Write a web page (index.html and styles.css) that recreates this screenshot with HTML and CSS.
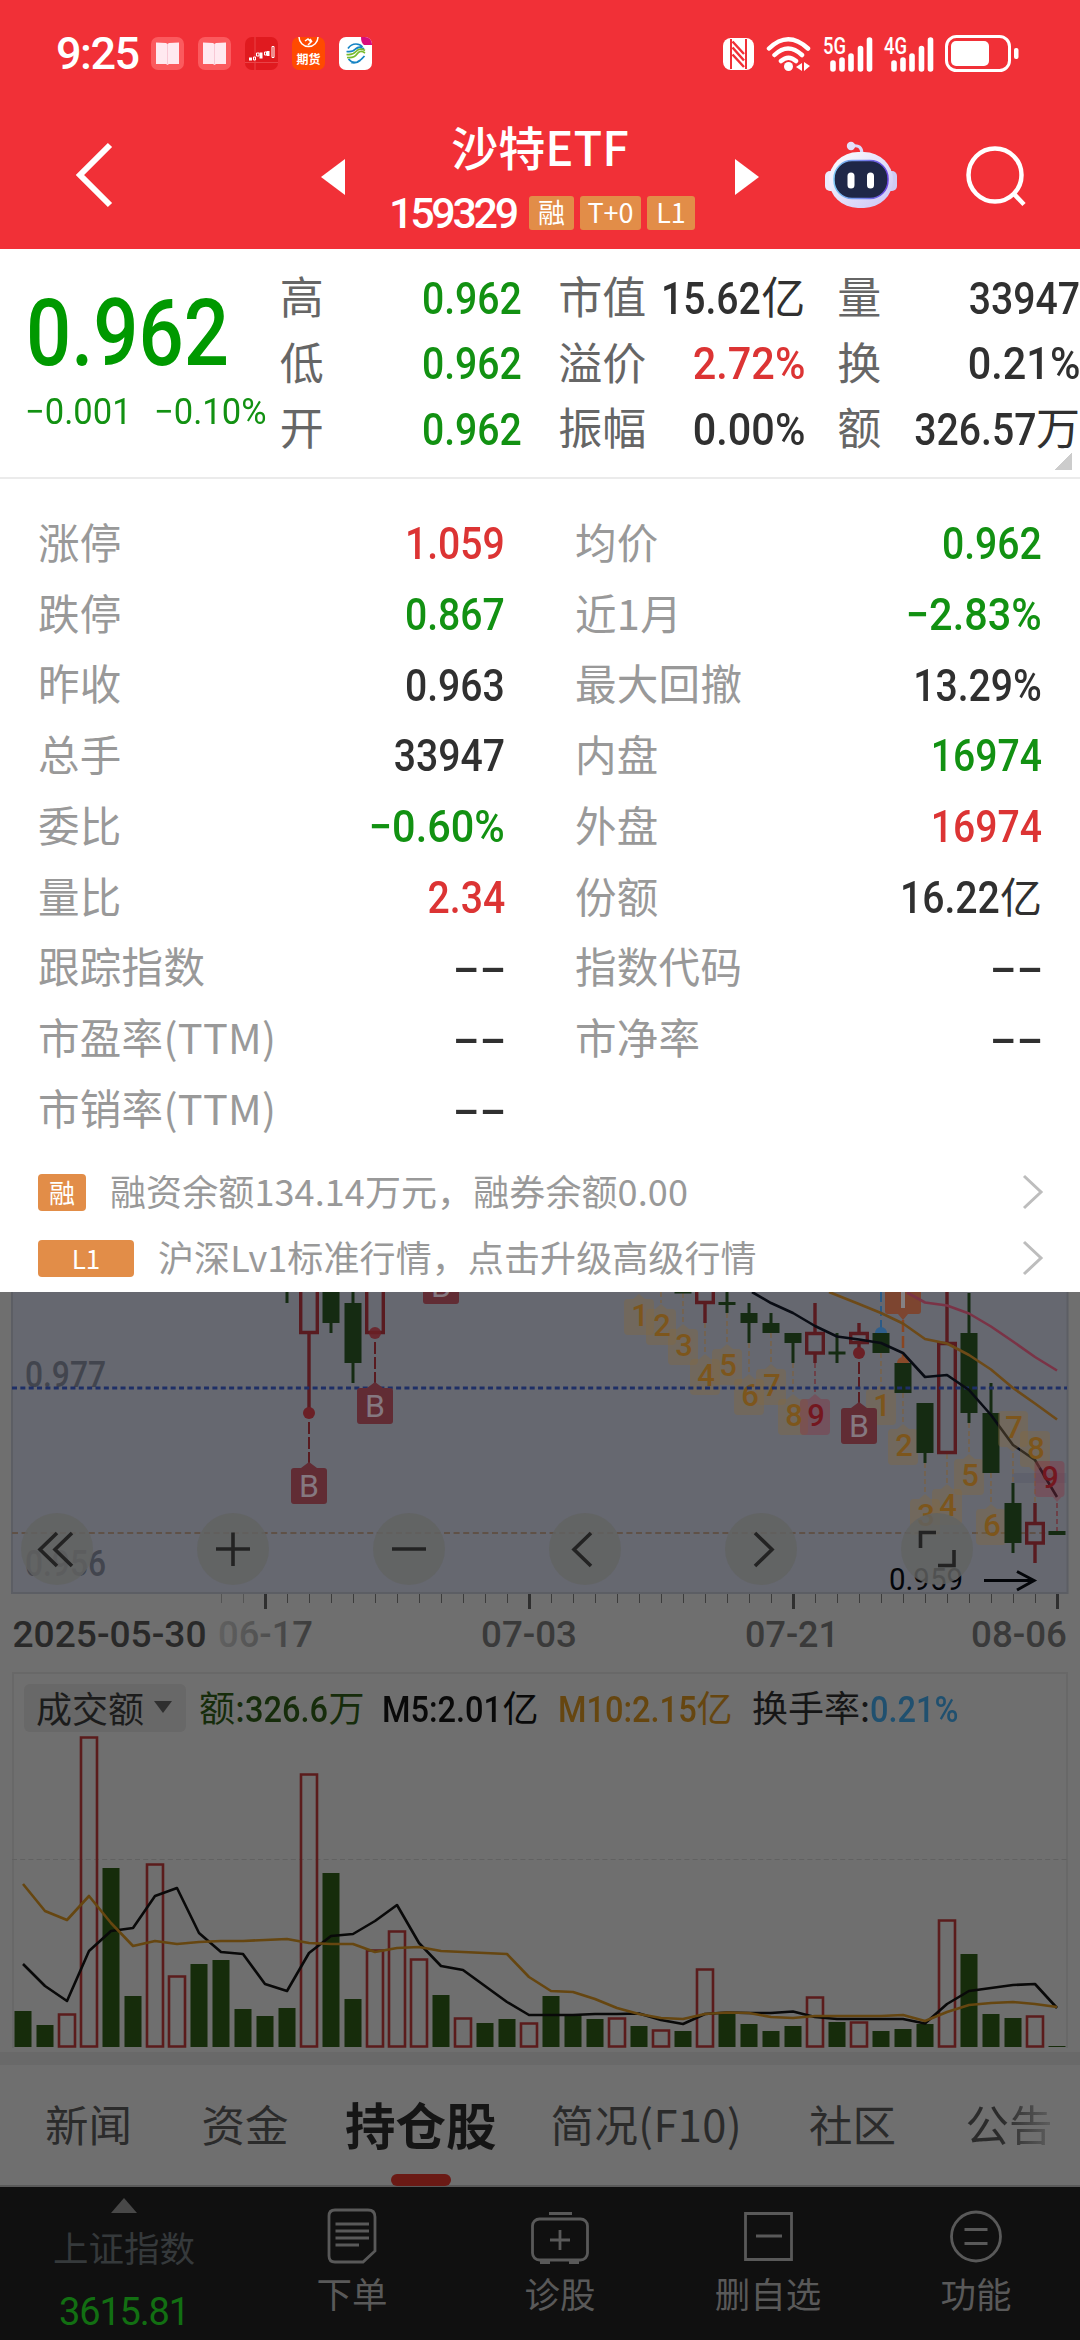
FILE: index.html
```html
<!DOCTYPE html>
<html lang="zh-CN">
<head>
<meta charset="utf-8">
<title>沙特ETF 159329</title>
<link rel="stylesheet" href="styles.css">
</head>
<body>
<header class="top">
  <div class="status">
    <span class="clock">9:25</span>
    <div class="apps">
      <svg class="app" viewBox="0 0 33 33"><rect width="33" height="33" rx="7" fill="#fb5a5e"/><path d="M5 5.500 L15 6 16.500 7 18 6 28 5.500V27H18L16.500 28 15 27H5Z" fill="#ffe9f0"/><path d="M16.500 7V28" stroke="#f8c9d6"/></svg>
      <svg class="app" viewBox="0 0 33 33"><rect width="33" height="33" rx="7" fill="#fb5a5e"/><path d="M5 5.500 L15 6 16.500 7 18 6 28 5.500V27H18L16.500 28 15 27H5Z" fill="#ffe9f0"/><path d="M16.500 7V28" stroke="#f8c9d6"/></svg>
      <svg class="app" viewBox="0 0 33 33"><rect width="33" height="33" rx="7" fill="#e01a1f"/><path d="M0 25.500H33M10 0V33" stroke="#e94347"/><path d="M4 22h3M16 15.500v6M23 14v5" stroke="#fff" stroke-width="3"/><path d="M8.500 20h2v3h-2zM11.500 16h2.500v3h-2.500zM19.500 15h2v3h-2zM27 9.500h2v11h-2z" fill="none" stroke="#fff"/></svg>
      <svg class="app" viewBox="0 0 33 33"><rect width="33" height="33" rx="7" fill="#ff4a00"/><path d="M7 0a9.500 9.500 0 0 0 19 0" fill="none" stroke="#fff" stroke-width="1.500"/><path d="M13 4l3-2 3 3-3 3M18 2l2 3" fill="none" stroke="#fff" stroke-width="1.500"/><text x="16.500" y="26.500" class="app-word">期货</text></svg>
      <svg class="app" viewBox="0 0 33 33"><rect width="33" height="33" rx="7" fill="#fff"/><path d="M22 0h4a7 7 0 0 1 7 7v1h-8q-3-2-3-8z" fill="#d80c7c"/><g fill="none" stroke-width="1.700"><path d="M9 11.500q3-4.500 8-4.500 4 0 6.500 3M7.500 14.500q6 1 9-2.500 4-3.500 8.500 0M9.500 22q3.500 4.500 8.500 3 4-1.500 7.500-6M12 25.500q5 1.500 9-2 2.500-2.500 4-4" stroke="#1684c4"/><path d="M7.500 17.500q6 1 9.500-3t9-1M8 20.500q7 1 10-3.500t8-1" stroke="#79bb2c"/></g></svg>
    </div>
    <div class="signals">
      <svg width="32" height="34" viewBox="0 0 32 34"><rect x="0" y="1" width="31" height="32" rx="8" fill="#fff"/><path d="M8 2V32M23 2V32" stroke="#f13037" stroke-width="2"/><path d="M9.500 4.500L21 17M9.500 10.500L21 23.500M9.500 17.500L21 30" stroke="#f13037" stroke-width="2.500"/></svg>
      <svg width="46" height="36" viewBox="0 0 46 36" fill="none" stroke="#fff" stroke-width="4.500" stroke-linecap="round"><path d="M3 12.500Q22 -6 42 12.500M8.500 19Q22 6 36 19M15 25Q22.500 18.500 30 25"/><circle cx="22.500" cy="30.500" r="4.500" fill="#fff" stroke="none"/><path d="M36 27v8l-6-4zM38 26l6 4-6 5z" fill="#fff" stroke="none"/></svg>
      <svg class="cell" width="50" height="36" viewBox="0 0 50 36"><text x="0" y="18" class="net" textLength="23" lengthAdjust="spacingAndGlyphs">5G</text><path d="M10 27V33M19 24V33M28 20V33M37.500 12.500V33M46.500 4V33" stroke="#fff" stroke-width="5.600" stroke-linecap="round"/></svg>
      <svg class="cell" width="50" height="36" viewBox="0 0 50 36"><text x="0" y="18" class="net" textLength="23" lengthAdjust="spacingAndGlyphs">4G</text><path d="M10 27V33M19 24V33M28 20V33M37.500 12.500V33M46.500 4V33" stroke="#fff" stroke-width="5.600" stroke-linecap="round"/></svg>
      <svg width="74" height="38" viewBox="0 0 74 38"><rect x="1.500" y="1.500" width="63" height="34" rx="10" fill="none" stroke="#fff" stroke-width="3"/><rect x="6" y="6" width="38" height="25" rx="5" fill="#fff"/><rect x="69" y="13" width="4.500" height="11" rx="2" fill="#fff"/></svg>
    </div>
  </div>
  <nav class="nav">
    <svg class="back" width="40" height="66" viewBox="0 0 40 66"><path d="M36 3L6 33 36 63" fill="none" stroke="#fff" stroke-width="6"/></svg>
    <svg class="prev" width="24" height="36" viewBox="0 0 24 36"><path d="M0 18L24 0V36Z" fill="#fff"/></svg>
    <div class="title">
      <h1>沙特ETF</h1>
      <div class="code-row"><span class="code">159329</span><span class="tag t-rong">融</span><span class="tag t-t0">T+0</span><span class="tag t-l1">L1</span></div>
    </div>
    <svg class="next" width="24" height="36" viewBox="0 0 24 36"><path d="M24 18L0 0V36Z" fill="#fff"/></svg>
    <svg class="robot" width="74" height="70" viewBox="0 0 74 70"><defs><linearGradient id="shell" x1="0" y1="0" x2="1" y2="1"><stop offset="0" stop-color="#fff"/><stop offset="1" stop-color="#c9c4f5"/></linearGradient><linearGradient id="rim" x1="0" y1="0" x2="1" y2="0"><stop offset="0" stop-color="#7ec8f5"/><stop offset="1" stop-color="#6a45e0"/></linearGradient></defs><path d="M27 5Q37 3 37 13" fill="none" stroke="#dcdafa" stroke-width="3"/><circle cx="26" cy="5" r="4.200" fill="#e4e1fb"/><rect x="0" y="30" width="12" height="20" rx="5" fill="#eceafc"/><rect x="60" y="30" width="12" height="20" rx="5" fill="#cfcbf4"/><rect x="4" y="11" width="64" height="56" rx="29" fill="url(#shell)"/><rect x="9" y="19.500" width="54" height="38" rx="18" fill="#1f2747" stroke="url(#rim)" stroke-width="1.500"/><path d="M26 35v9M45.500 35v9" stroke="#fff" stroke-width="7" stroke-linecap="round"/></svg>
    <svg class="search" width="62" height="62" viewBox="0 0 62 62" fill="none" stroke="#fff" stroke-width="4.500"><circle cx="29" cy="29" r="26.500"/><path d="M48 48L58 58.500"/></svg>
  </nav>
</header>

<section class="quote">
  <div class="price">
    <span class="num big">0.962</span>
    <div class="change"><span class="num">−0.001</span><span class="num">−0.10%</span></div>
  </div>
  <dl class="stats s1">
    <dt>高</dt><dd class="dn"><span class="num">0.962</span></dd>
    <dt>低</dt><dd class="dn"><span class="num">0.962</span></dd>
    <dt>开</dt><dd class="dn"><span class="num">0.962</span></dd>
  </dl>
  <dl class="stats s2">
    <dt>市值</dt><dd><span class="num">15.62</span>亿</dd>
    <dt>溢价</dt><dd class="up"><span class="num pct">2.72%</span></dd>
    <dt>振幅</dt><dd><span class="num pct">0.00%</span></dd>
  </dl>
  <dl class="stats s3">
    <dt>量</dt><dd><span class="num">33947</span></dd>
    <dt>换</dt><dd><span class="num pct">0.21%</span></dd>
    <dt>额</dt><dd><span class="num">326.57</span>万</dd>
  </dl>
  <i class="corner"></i>
</section>

<section class="detail">
  <dl>
    <dt>涨停</dt><dd class="up"><span class="num">1.059</span></dd>
    <dt>跌停</dt><dd class="dn"><span class="num">0.867</span></dd>
    <dt>昨收</dt><dd><span class="num">0.963</span></dd>
    <dt>总手</dt><dd><span class="num">33947</span></dd>
    <dt>委比</dt><dd class="dn"><span class="num pct">−0.60%</span></dd>
    <dt>量比</dt><dd class="up"><span class="num">2.34</span></dd>
    <dt>跟踪指数</dt><dd><span class="none">--</span></dd>
    <dt>市盈率(TTM)</dt><dd><span class="none">--</span></dd>
    <dt>市销率(TTM)</dt><dd><span class="none">--</span></dd>
  </dl>
  <dl>
    <dt>均价</dt><dd class="dn"><span class="num">0.962</span></dd>
    <dt>近1月</dt><dd class="dn"><span class="num pct">−2.83%</span></dd>
    <dt>最大回撤</dt><dd><span class="num">13.29%</span></dd>
    <dt>内盘</dt><dd class="dn"><span class="num">16974</span></dd>
    <dt>外盘</dt><dd class="up"><span class="num">16974</span></dd>
    <dt>份额</dt><dd><span class="num">16.22</span>亿</dd>
    <dt>指数代码</dt><dd><span class="none">--</span></dd>
    <dt>市净率</dt><dd><span class="none">--</span></dd>
  </dl>
</section>

<section class="notices">
  <div class="notice"><span class="badge">融</span><p>融资余额134.14万元，融券余额0.00</p><svg width="24" height="36" viewBox="0 0 24 36"><path d="M3 2L20 18 3 34" fill="none" stroke="#bdbdbd" stroke-width="3"/></svg></div>
  <div class="notice"><span class="badge wide">L1</span><p>沪深Lv1标准行情，点击升级高级行情</p><svg width="24" height="36" viewBox="0 0 24 36"><path d="M3 2L20 18 3 34" fill="none" stroke="#bdbdbd" stroke-width="3"/></svg></div>
</section>

<svg class="kline" viewBox="0 1292 1080 380">
  <defs>
    <path id="flagU" d="M-11 0H-6L0-5 6 0H11Q15 0 15 4V32Q15 36 11 36H-11Q-15 36-15 32V4Q-15 0-11 0Z"/>
    <path id="flagD" d="M-11 0H11Q15 0 15 4V32Q15 36 11 36H6L0 41-6 36H-11Q-15 36-15 32V4Q-15 0-11 0Z"/>
    <path id="flagB" d="M-15 0H-8L0-6 8 0H15Q18 0 18 3V33Q18 36 15 36H-15Q-18 36-18 33V3Q-18 0-15 0Z"/>
    <linearGradient id="fade" x1="0" x2="1"><stop offset="0" stop-color="#606060"/><stop offset=".5" stop-color="#505050"/><stop offset="1" stop-color="#3c3c3c"/></linearGradient>
  </defs>
  <rect x="12" y="1280" width="1055.500" height="313" fill="#666870" stroke="#5c5e64" stroke-width="2"/>
  <rect x="1012" y="1473" width="55" height="10" fill="#5f616c"/>
  <g class="level"><text x="25" y="1387" textLength="81" lengthAdjust="spacingAndGlyphs">0.977</text><text x="25" y="1576" textLength="81" lengthAdjust="spacingAndGlyphs">0.956</text></g>
  <path d="M12 1533H1067" stroke="#5f5147" stroke-width="2" stroke-dasharray="6 3.600"/>

  <g class="dots"><path d="M661 1292V1303M683 1293V1323M705 1323V1354M727 1313V1343M749 1343V1373M771 1333V1363M793 1363V1393M881 1353V1383M903 1393V1423M925 1463V1493M947 1454V1483M969 1423V1453M991 1473V1503M1013 1453V1483M1035 1473V1503"/><path d="M815 1363V1393M1057 1503V1531" class="dots-red"/></g>

  <g class="flags">
    <use href="#flagU" x="639" y="1299"/><use href="#flagU" x="661" y="1309"/><use href="#flagU" x="683" y="1329"/><use href="#flagU" x="705" y="1359"/><use href="#flagU" x="727" y="1349"/><use href="#flagU" x="749" y="1379"/><use href="#flagU" x="771" y="1369"/><use href="#flagU" x="793" y="1399"/><use href="#flagU" x="881" y="1389"/><use href="#flagU" x="903" y="1429"/><use href="#flagU" x="925" y="1499"/><use href="#flagU" x="947" y="1489"/><use href="#flagU" x="969" y="1459"/><use href="#flagU" x="991" y="1509"/>
    <use href="#flagU" x="815" y="1399" class="f-red"/>
  </g>
  <g class="flag-no">
    <text x="640" y="1326">1</text><text x="662" y="1336">2</text><text x="684" y="1356">3</text><text x="706" y="1386">4</text><text x="728" y="1376">5</text><text x="750" y="1406">6</text><text x="772" y="1396">7</text><text x="794" y="1426">8</text><text x="882" y="1416">1</text><text x="904" y="1456">2</text><text x="926" y="1526">3</text><text x="948" y="1516">4</text><text x="970" y="1486">5</text><text x="992" y="1536">6</text><text x="816" y="1426" class="n-red">9</text>
  </g>

  <g fill="#152b12">
    <path d="M285.500 1292h3v11h-3zM322.500 1292h17v31h-17zM329.500 1323h3v10h-3zM351.500 1292h3v91h-3zM344.500 1303h17v60h-17z"/>
    <path d="M674.500 1292h17v1.500h-17zM725.500 1292h3v21h-3zM718.500 1302h17v3h-17zM747.500 1303h3v40h-3zM740.500 1313h17v10h-17zM769.500 1313h3v20h-3zM762.500 1323h17v10h-17zM791.500 1333h3v30h-3zM784.500 1333h17v10h-17zM835.500 1333h3v30h-3zM828.500 1351.500h17v3h-17zM872.500 1333h17v20h-17zM894.500 1363h17v30h-17zM923.500 1403h3v60h-3zM916.500 1403h17v50h-17zM967.500 1293h3v130h-3zM960.500 1333h17v80h-17zM989.500 1383h3v30h-3zM982.500 1413h17v60h-17zM1011.500 1483h3v70h-3zM1004.500 1503h17v40h-17zM1048.500 1531h17v4h-17z"/>
  </g>
  <g fill="none" stroke="#591b20" stroke-width="3.400">
    <path d="M300.700 1285V1332.500H317.300V1285M309 1334V1413M366.700 1285V1332.500H383.300V1285"/>
    <path d="M696.700 1285V1302.500H713.300V1285M705 1304V1323M806.700 1333.500h16.600v19.500h-16.600zM815 1303v29M815 1354v9M850.700 1333.500h16.600v9h-16.600zM859 1323v9M859 1344v9M938.700 1343.500h16.600v109h-16.600zM947 1292v50M1026.700 1523.500h16.600v19.500h-16.600zM1035 1503v19M1035 1544v19"/>
  </g>
  <g fill="#6b2026"><circle cx="309" cy="1413" r="6"/><circle cx="375" cy="1333" r="6" fill-opacity=".85"/><circle cx="859" cy="1353" r="6"/></g>
  <path d="M309 1422V1463M375 1342V1383M859 1362V1403" stroke="#591b20" stroke-width="2" stroke-dasharray="12 3"/>
  <path d="M881 1292V1328" stroke="#2b5a86" stroke-width="2" stroke-dasharray="10 4"/><path d="M875 1333a6 6 0 0 1 12 0z" fill="#2f5f8c"/>
  <path d="M903 1320V1358" stroke="#8a4622" stroke-width="2.500" stroke-dasharray="12 4"/><path d="M897 1363a6 6 0 0 1 12 0z" fill="#8a4a2a"/>
  <path d="M885 1285H921V1311Q921 1314 918 1314H908L903 1320 898 1314H888Q885 1314 885 1311Z" fill="#7d4530"/><path d="M903 1292V1308" stroke="#858184" stroke-width="4"/>
  <path d="M12 1388H1067" stroke="#1e2f66" stroke-width="3" stroke-dasharray="5 3.350"/>

  <g fill="#612c34"><use href="#flagB" x="309" y="1468"/><use href="#flagB" x="375" y="1388"/><use href="#flagB" x="859" y="1408"/><use href="#flagB" x="441" y="1268"/></g>
  <g class="b-mark"><text x="309" y="1497">B</text><text x="375" y="1417">B</text><text x="859" y="1437">B</text><text x="441" y="1297">B</text></g>

  <g fill="none" stroke-width="2.600" stroke-linejoin="round">
    <path stroke="#090c14" d="M752 1292L771 1303 793 1313 815 1326 837 1336.500 859 1339.500 881 1343 903 1353 925 1377 947 1375 969 1390 991 1415 1013 1445 1035 1460 1057 1497"/>
    <path stroke="#6d4a18" d="M829 1292L859 1304 881 1313 903 1323.500 925 1339 947 1343.500 969 1355 991 1369.500 1013 1388 1035 1403.500 1057 1419.500"/>
    <path stroke="#7a3346" d="M907 1292.500L925 1302.500 947 1305.500 969 1313.500 991 1326.500 1013 1341.500 1035 1357 1057 1370.500"/>
  </g>
  <g class="flags"><use href="#flagD" x="1013" y="1411"/><use href="#flagD" x="1035" y="1431"/><path d="M1038.500 1461H1060.500Q1064.500 1461 1064.500 1465V1493Q1064.500 1497 1061.500 1497L1057 1502 1053 1497H1038.500Q1034.500 1497 1034.500 1493V1465Q1034.500 1461 1038.500 1461Z" class="f-red"/></g>
  <g class="flag-no"><text x="1014" y="1438">7</text><text x="1036" y="1459">8</text><text x="1050" y="1488" class="n-red">9</text></g>

  <text x="889" y="1590" class="low" textLength="74" lengthAdjust="spacingAndGlyphs">0.959</text>
  <path d="M984 1580.500H1034M1017 1571.500L1034 1580.500 1017 1590" fill="none" stroke="#030509" stroke-width="3"/>

  <g fill="#626361" fill-opacity=".82"><circle cx="57" cy="1549" r="36"/><circle cx="233" cy="1549" r="36"/><circle cx="409" cy="1549" r="36"/><circle cx="585" cy="1549" r="36"/><circle cx="761" cy="1549" r="36"/><circle cx="937" cy="1549" r="36"/></g>
  <g fill="none" stroke="#232323" stroke-width="3.600">
    <path d="M57 1533L40 1549.500 57 1566M72 1533L55 1549.500 72 1566M216 1549H250M233 1532.500V1566M392 1549H426M591 1533L574 1549.500 591 1566M755 1533L772 1549.500 755 1566M920.500 1548V1532.500H936M954 1550V1565.500H938"/>
  </g>

  <path d="M221.500 1594V1603M243.500 1594V1603" stroke="#545454"/>
  <path d="M287.500 1594V1603M309.500 1594V1603M331.500 1594V1603M353.500 1594V1603M375.500 1594V1603M397.500 1594V1603M419.500 1594V1603M441.500 1594V1603M463.500 1594V1603M485.500 1594V1603M507.500 1594V1603M551.500 1594V1603M573.500 1594V1603M595.500 1594V1603M617.500 1594V1603M639.500 1594V1603M661.500 1594V1603M683.500 1594V1603M705.500 1594V1603M727.500 1594V1603M749.500 1594V1603M771.500 1594V1603M815.500 1594V1603M837.500 1594V1603M859.500 1594V1603M881.500 1594V1603M903.500 1594V1603M925.500 1594V1603M947.500 1594V1603M969.500 1594V1603M991.500 1594V1603M1013.500 1594V1603M1035.500 1594V1603" stroke="#3c3c3c"/>
  <path d="M265.500 1594V1609M529.500 1594V1609M793.500 1594V1609M1057.500 1594V1609" stroke="#2f2f2f" stroke-width="3"/>
  <g class="dates">
    <text x="12.500" y="1647" fill="#292929" textLength="194" lengthAdjust="spacingAndGlyphs">2025-05-30</text>
    <text x="218" y="1647" fill="url(#fade)" textLength="95" lengthAdjust="spacingAndGlyphs">06-17</text>
    <text x="481" y="1647" textLength="96" lengthAdjust="spacingAndGlyphs">07-03</text>
    <text x="745" y="1647" textLength="94" lengthAdjust="spacingAndGlyphs">07-21</text>
    <text x="971" y="1647" textLength="96" lengthAdjust="spacingAndGlyphs">08-06</text>
  </g>
</svg>

<section class="volume">
  <div class="legend">
    <span class="pick">成交额<i></i></span>
    <span class="l-amt">额:<b>326.6</b>万</span>
    <span class="l-m5"><b>M5:2.01</b>亿</span>
    <span class="l-m10"><b>M10:2.15</b>亿</span>
    <span class="l-rate">换手率:<b>0.21%</b></span>
  </div>
  <svg class="bars" viewBox="12 1733 1056 315">
    <path d="M12 1859.500H1067" stroke="#616161" stroke-dasharray="5 3.200"/>
    <path fill="#162c0b" d="M14.500 2011h17v36h-17zM36.500 2025h17v22h-17zM102.500 1868h17v179h-17zM124.500 1996h17v51h-17zM190.500 1964h17v83h-17zM212.500 1960h17v87h-17zM234.500 2009h17v38h-17zM256.500 2016h17v31h-17zM278.500 2008h17v39h-17zM322.500 1873h17v174h-17zM344.500 1999h17v48h-17zM432.500 1995h17v52h-17zM476.500 2023h17v24h-17zM498.500 2019h17v28h-17zM542.500 1996h17v51h-17zM564.500 2015h17v32h-17zM586.500 2019h17v28h-17zM630.500 2026h17v21h-17zM674.500 2031h17v16h-17zM718.500 2014h17v33h-17zM740.500 2024h17v23h-17zM762.500 2031h17v16h-17zM784.500 2026h17v21h-17zM828.500 2022h17v25h-17zM872.500 2031h17v16h-17zM894.500 2029h17v18h-17zM916.500 2024h17v23h-17zM960.500 1954h17v93h-17zM982.500 2014h17v33h-17zM1004.500 2018h17v29h-17zM1048.500 2046h17v1h-17z"/>
    <path fill="none" stroke="#5b1c1c" stroke-width="2.600" d="M59 2014.500h16v32h-16zM81 1737.500h16v309h-16zM147 1864.500h16v182h-16zM169 1976.500h16v70h-16zM301 1774.500h16v272h-16zM367 1950.500h16v96h-16zM389 1931.500h16v115h-16zM411 1959.500h16v87h-16zM455 2018.500h16v28h-16zM521 2023.500h16v23h-16zM609 2018.500h16v28h-16zM653 2030.500h16v16h-16zM697 1969.500h16v77h-16zM807 1997.500h16v49h-16zM851 2022.500h16v24h-16zM939 1920.500h16v126h-16zM1027 2016.500h16v30h-16z"/>
    <g fill="none" stroke-width="2.600" stroke-linejoin="round">
      <path stroke="#090909" d="M23 1964L45 1986 67 2001 89 1951 111 1931 133 1928 155 1896 177 1888 199 1933 221 1952 243 1954 265 1984 287 1991 309 1953 331 1936 353 1934 375 1921 397 1905 419 1943 441 1966 463 1970 485 1986 507 2002 529 2015 551 2015 573 2015 595 2014 617 2014 639 2013.500 661 2020 683 2024 705 2014 727 2012.500 749 2013 771 2013 793 2011.500 815 2017 837 2019 859 2019 881 2019 903 2019 925 2023.500 947 2004 969 1991 991 1988 1013 1985 1035 1984 1057 2008"/>
      <path stroke="#664610" d="M23 1884L45 1911 67 1920 89 1896 111 1923 133 1946 155 1941 177 1944 199 1942 221 1941 243 1941 265 1940 287 1939 309 1943 331 1944 353 1944 375 1952 397 1948 419 1947 441 1951 463 1952 485 1953 507 1954 529 1977 551 1991 573 1992 595 1999 617 2008 639 2014 661 2018 683 2019 705 2014 727 2012.500 749 2013 771 2017 793 2018 815 2016 837 2016 859 2016 881 2016 903 2015 925 2021 947 2012 969 2005 991 2003 1013 2002 1035 2004 1057 2007"/>
    </g>
  </svg>
</section>

<div class="tabs">
  <span>新闻</span><span>资金</span><span class="on">持仓股</span><span class="f10">简况(F10)</span><span>社区</span><span class="last">公告</span>
</div>

<footer class="bottom">
  <div class="index"><i></i><span>上证指数</span><b>3615.81</b></div>
  <div class="act a1"><svg width="52" height="58" viewBox="0 0 52 58"><path d="M9 3H42Q49 3 49 10V44L37 55H9Q3 55 3 49V9Q3 3 9 3Z" /><path d="M9.500 17H43M9.500 24H43M9.500 31H43M9.500 38H33"/></svg><span>下单</span></div>
  <div class="act a2"><svg width="62" height="58" viewBox="0 0 62 58"><rect x="3.500" y="12" width="55" height="41" rx="7"/><path d="M20 6.500H43M31 23V43M21 33H41M11 55.500H21M40 55.500H50"/></svg><span>诊股</span></div>
  <div class="act a3"><svg width="52" height="58" viewBox="0 0 52 58"><path d="M3.500 6.500H49.500V52.500H3.500ZM14 29H40"/></svg><span>删自选</span></div>
  <div class="act a4"><svg width="56" height="58" viewBox="0 0 56 58"><circle cx="28" cy="29.500" r="24.500"/><path d="M16.500 22.500H39.500M16.500 36.500H39.500"/></svg><span>功能</span></div>
</footer>
</body>
</html>
```

FILE: styles.css
```css
* { box-sizing: border-box; margin: 0; padding: 0; }
body {
  width: 1080px; height: 2340px; overflow: hidden;
  display: flex; flex-direction: column;
  background: #6f6f6f; color: #303030;
  font-family: "Noto Sans CJK SC", sans-serif; line-height: 1;
}
svg { display: block; flex: none; }
i { font-style: normal; }

/* header */
.top { height: 249px; flex: none; background: #f13037; color: #fff; }
.status { height: 106px; display: flex; align-items: center; padding: 1px 61px 0 56px; }
.clock { width: 95px; font: 500 45px/1 Roboto, sans-serif; letter-spacing: -1.500px; }
.apps { display: flex; gap: 14px; }
.app { width: 33px; height: 33px; }
.app-word { font-size: 12px; font-weight: 700; fill: #fff; text-anchor: middle; }
.signals { margin-left: auto; display: flex; align-items: center; gap: 11px; }
.cell { overflow: visible; }
.net { font: 500 24px Roboto, sans-serif; fill: #fff; }
.nav { height: 143px; display: flex; align-items: flex-start; }
.back { margin: 36px 0 0 74px; }
.prev { margin: 53px 0 0 207px; }
.title { width: 390px; display: flex; flex-direction: column; align-items: center; }
h1 { margin-top: 15px; font-size: 47px; font-weight: 500; line-height: 50px; white-space: nowrap; }
.code-row { display: flex; align-items: center; height: 34px; margin: 25px 0 0 4px; }
.code { width: 140px; font: 500 43px/34px Roboto, sans-serif; letter-spacing: -3.300px; }
.tag { height: 34px; display: flex; align-items: center; justify-content: center; border-radius: 3px; background: #e28d48; color: #fff; font-size: 27px; line-height: 34px; padding-bottom: 3px; }
.t-rong { width: 45px; }
.t-t0 { width: 61px; margin: 0 6px; }
.t-l1 { width: 48px; }
.next { margin-top: 53px; }
.robot { margin: 35px 0 0 66px; }
.search { margin: 40px 0 0 67px; }

/* quote summary */
.num { display: inline-block; font-family: Roboto, sans-serif; font-size: 45px; font-weight: 500; transform: scaleX(.87); transform-origin: right center; }
.num.pct { transform: scaleX(.92); }
.up { color: #dc3434; }
.dn { color: #129112; }
.quote { position: relative; height: 230px; flex: none; display: flex; background: #fff; border-bottom: 2px solid #ebebeb; }
.price { width: 280px; padding: 44px 0 0 26px; color: #009900; }
.price .num { transform-origin: left center; }
.price .big { font-size: 92px; line-height: 82px; transform: scaleX(.865); }
.change { display: flex; gap: 18px; margin: 19px 0 0 -1px; color: #129112; }
.change .num { width: 111px; font-size: 36px; font-weight: 400; white-space: nowrap; transform: scaleX(.96); }
.stats { display: grid; grid-template-columns: auto 1fr; grid-auto-rows: 65.500px; align-items: center; padding-top: 15px; font-size: 44px; height: 212px; white-space: nowrap; }
.stats dt { color: #666; padding-bottom: 3px; }
.stats dd { text-align: right; }
.s1 { width: 242px; }
.s2 { width: 242px; margin-left: 37px; }
.s3 { width: 243px; margin-left: 37px; }
.corner { position: absolute; right: 8px; bottom: 7px; width: 18px; height: 18px; background: linear-gradient(135deg, transparent 50%, #ccc 50%); }

/* detail */
.detail { height: 668px; flex: none; display: flex; padding: 29px 38px 0; gap: 70px; background: #fff; }
.detail dl { display: grid; grid-template-columns: auto 1fr; grid-auto-rows: 70.700px; align-items: center; align-content: start; width: 468px; font-size: 42px; }
.detail dt { color: #999; font-size: 41.500px; letter-spacing: .3px; padding-bottom: 3px; }
.detail dd { text-align: right; }
.none { display: inline-block; font: 500 45px/1 Roboto, sans-serif; transform: scaleX(1.750); transform-origin: right center; margin-right: -2px; }

/* notices */
.notices { height: 145px; flex: none; padding-top: 12px; background: #fff; }
.notice { height: 66px; display: flex; align-items: center; padding: 0 35px 0 38px; }
.notice p { flex: 1; margin-left: 24px; padding-bottom: 4px; font-size: 36px; letter-spacing: .1px; color: #999; white-space: nowrap; }
.badge { width: 48px; height: 37px; border-radius: 4px; background: #e28d48; color: #fff; font-size: 26px; line-height: 36px; text-align: center; }
.badge.wide { width: 96px; }

/* candle chart */
.kline { width: 1080px; height: 380px; }
.kline text { font-family: Roboto, sans-serif; }
.level { font-size: 37px; fill: #42454e; font-weight: 500; }
.dots { fill: none; stroke: #75634f; stroke-width: 1.800; stroke-dasharray: 5 3; }
.dots-red { stroke: #6f3c44; }
.flags { fill: #86683c; fill-opacity: .36; }
.flags .f-red { fill: #8a3040; fill-opacity: .38; }
.flag-no { font-size: 31px; font-weight: 500; fill: #7d561c; text-anchor: middle; }
.flag-no .n-red { fill: #74171f; }
.b-mark { font-size: 32px; fill: #857880; text-anchor: middle; }
.low { font-size: 32px; fill: #030509; }
.dates { font-size: 36px; fill: #3a3a3a; font-weight: 500; }

/* volume */
.volume { height: 376px; flex: none; margin: 0 12px; border: 2px solid #686868; border-bottom: 0; }
.legend { height: 59px; padding: 10px 0 0 10px; display: flex; font-size: 36px; line-height: 45px; white-space: nowrap; }
.legend b { display: inline-block; font: 500 37px/1 Roboto, sans-serif; transform: scaleX(.88); transform-origin: left center; }
.pick { width: 162px; height: 48px; padding: 0 0 2px 12px; display: flex; align-items: center; gap: 10px; border-radius: 6px; background: #686868; color: #1c1c1c; }
.pick i { border: 9px solid transparent; border-top: 12px solid #2f2f2f; border-bottom: 0; }
.l-amt { width: 183px; margin-left: 13px; color: #162c0b; }
.l-amt b { margin-right: -11px; }
.l-m5 { width: 176px; color: #090909; }
.l-m5 b { margin-right: -16px; }
.l-m10 { width: 194px; color: #664610; }
.l-m10 b { margin-right: -19px; }
.l-rate { color: #161616; }
.l-rate b { color: #20506f; }
.bars { width: 1056px; height: 315px; margin-left: -2px; }

/* tabs */
.tabs { height: 135px; flex: none; margin-top: 4px; padding: 0 0 3px 45px; border-top: 13px solid #696969; border-bottom: 2px solid #5a5a5a; display: flex; align-items: center; color: #2b2b2b; font-size: 43.500px; white-space: nowrap; }
.tabs span { margin-right: 69.500px; }
.tabs .f10 { letter-spacing: .4px; margin-right: 67px; }
.tabs .on { position: relative; font-weight: 700; font-size: 50.500px; color: #151515; margin: 0 54px 0 -13px; }
.tabs .on::after { content: ""; position: absolute; left: 46px; bottom: -37px; width: 60px; height: 12px; border-radius: 6px; background: #6b1a15; }
.tabs .last { margin-right: 0; background: linear-gradient(90deg, #2b2b2b 40%, #5f5f5f); -webkit-background-clip: text; background-clip: text; color: transparent; }

/* bottom bar */
.bottom { height: 153px; flex: none; background: #101010; display: flex; color: #595959; font-size: 35.500px; }
.index { width: 248px; display: flex; flex-direction: column; align-items: center; color: #35393b; }
.index i { margin-top: 11px; border: 13px solid transparent; border-bottom: 15px solid #484848; border-top: 0; }
.index span { margin-top: 16px; }
.index b { margin-top: 28px; font: 400 38px/1 Roboto, sans-serif; letter-spacing: -1.200px; color: #126f12; }
.act { width: 208px; display: flex; flex-direction: column; align-items: center; }
.act svg { margin-top: 20px; fill: none; stroke: #595959; stroke-width: 2.800; }
.act span { margin-top: 10px; }
```
